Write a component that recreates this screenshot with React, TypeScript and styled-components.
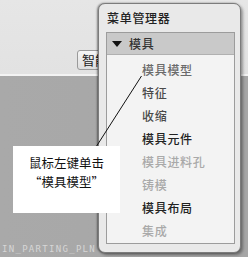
import React from "react";
import styled, { createGlobalStyle } from "styled-components";

const GlobalStyle = createGlobalStyle`
  html, body {
    margin: 0;
    padding: 0;
    background: #a8a8a8;
  }
  body {
    font-family: "Noto Sans CJK SC", "Noto Sans", sans-serif;
  }
`;

type Item = { label: string; tone: "hover" | "normal" | "strong" | "disabled" };

const items: Item[] = [
  { label: "模具模型", tone: "hover" },
  { label: "特征", tone: "normal" },
  { label: "收缩", tone: "normal" },
  { label: "模具元件", tone: "strong" },
  { label: "模具进料孔", tone: "disabled" },
  { label: "铸模", tone: "disabled" },
  { label: "模具布局", tone: "strong" },
  { label: "集成", tone: "disabled" },
];

const toneColor = {
  hover: "#6a6a6a",
  normal: "#4a4a4a",
  strong: "#222",
  disabled: "#a9a9a9",
};

const App = () => {
  return (
    <Screen>
      <GlobalStyle />
      <TopBar>
        <SmartButton>智能</SmartButton>
      </TopBar>
      <Workspace>
        <DatumName>IN_PARTING_PLN</DatumName>
      </Workspace>

      <MenuWindow>
        <WindowTitle>菜单管理器</WindowTitle>
        <MenuPanel>
          <MenuHeader>
            <Caret />
            <span>模具</span>
          </MenuHeader>
          <MenuList>
            {items.map((it) => (
              <MenuItem key={it.label} $tone={it.tone}>
                {it.label}
              </MenuItem>
            ))}
          </MenuList>
        </MenuPanel>
      </MenuWindow>

      <Leader width="248" height="257" viewBox="0 0 248 257">
        <line x1="141.5" y1="76" x2="96" y2="147" stroke="#111" strokeWidth="1" />
      </Leader>

      <Callout>
        <div>鼠标左键单击</div>
        <div>“模具模型”</div>
      </Callout>
    </Screen>
  );
};

export default App;

const Screen = styled.div`
  position: relative;
  width: 248px;
  height: 257px;
  overflow: hidden;
  display: flex;
  flex-direction: column;
`;

const TopBar = styled.div`
  height: 76px;
  flex: none;
  background: linear-gradient(#e6e6e6, #e2e2e2);
  border-bottom: 2px solid #f3f3f3;
  display: flex;
  align-items: flex-end;
  padding: 0 0 4px 77px;
  box-sizing: border-box;
`;

const SmartButton = styled.div`
  height: 18px;
  padding: 0 4px;
  border: 1px solid #9a9a9a;
  border-radius: 3px;
  background: linear-gradient(#f6f6f6, #dedede);
  font-size: 13px;
  line-height: 18px;
  color: #222;
`;

const Workspace = styled.div`
  flex: 1;
  background: linear-gradient(90deg, #a9a9a9, #a6a6a6);
  display: flex;
  align-items: flex-end;
  padding: 0 0 1px 2px;
`;

const DatumName = styled.div`
  font-family: "DejaVu Sans Mono", monospace;
  font-size: 9px;
  letter-spacing: 1.3px;
  color: #d6d6d6;
  line-height: 14px;
`;

const MenuWindow = styled.div`
  position: absolute;
  left: 98px;
  top: 3px;
  width: 143px;
  height: 250px;
  box-sizing: border-box;
  border: 1px solid #7c7c7c;
  border-radius: 7px;
  background: #e9e9e9;
  box-shadow: -1px 0 2px rgba(0, 0, 0, 0.45), 2px 2px 3px rgba(0, 0, 0, 0.35);
  display: flex;
  flex-direction: column;
  padding: 0 5px 8px 7px;
`;

const WindowTitle = styled.div`
  height: 28px;
  font-size: 12px;
  font-weight: 500;
  letter-spacing: 0.7px;
  line-height: 28px;
  color: #222;
  padding-left: 1px;
`;

const MenuPanel = styled.div`
  flex: 1;
  border: 1px solid #9c9c9c;
  background: #f3f3f3;
  display: flex;
  flex-direction: column;
`;

const MenuHeader = styled.div`
  height: 21px;
  background: #c9c9c9;
  border-bottom: 1px solid #b0b0b0;
  display: flex;
  align-items: center;
  gap: 7px;
  padding-left: 5px;
  font-size: 12px;
  font-weight: 500;
  letter-spacing: 0.7px;
  color: #333;
`;

const Caret = styled.span`
  width: 0;
  height: 0;
  border-left: 5px solid transparent;
  border-right: 5px solid transparent;
  border-top: 6px solid #111;
`;

const MenuList = styled.div`
  display: flex;
  flex-direction: column;
  padding-top: 3px;
  padding-left: 35px;
`;

const MenuItem = styled.div<{ $tone: Item["tone"] }>`
  height: 23px;
  line-height: 23px;
  font-size: 12px;
  font-weight: 500;
  letter-spacing: 0.7px;
  color: ${(p) => toneColor[p.$tone]};
  white-space: nowrap;
`;

const Leader = styled.svg`
  position: absolute;
  left: 0;
  top: 0;
  pointer-events: none;
`;

const Callout = styled.div`
  position: absolute;
  left: 13px;
  top: 146px;
  width: 107px;
  height: 67px;
  background: #fff;
  box-sizing: border-box;
  padding-top: 7px;
  display: flex;
  flex-direction: column;
  align-items: center;
  font-size: 12.5px;
  font-weight: 400;
  line-height: 19px;
  color: #111;
`;
